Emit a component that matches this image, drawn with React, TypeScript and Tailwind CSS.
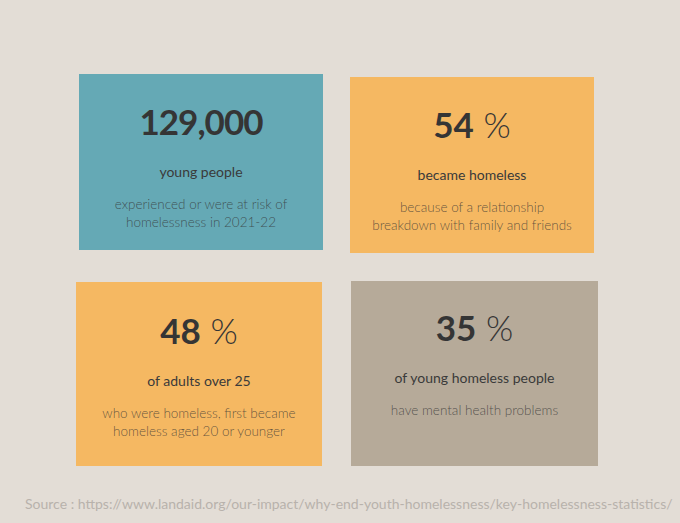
type Stat = {
  value: string;
  percent?: boolean;
  label: string;
  lines: string[];
  box: string;
  pad: string;
};

const stats: Stat[] = [
  {
    value: "129,000",
    label: "young people",
    lines: ["experienced or were at risk of", "homelessness in 2021-22"],
    box: "ml-[3px] w-[244px] h-[176px] bg-[#65a9b5]",
    pad: "pt-[27px]",
  },
  {
    value: "54",
    percent: true,
    label: "became homeless",
    lines: ["because of a relationship", "breakdown with family and friends"],
    box: "mt-[3px] w-[244px] h-[176px] bg-[#f5b862]",
    pad: "pt-[27px]",
  },
  {
    value: "48",
    percent: true,
    label: "of adults over 25",
    lines: ["who were homeless, first became", "homeless aged 20 or younger"],
    box: "mt-[1px] w-[246px] h-[184px] bg-[#f5b862]",
    pad: "pt-[28px]",
  },
  {
    value: "35",
    percent: true,
    label: "of young homeless people",
    lines: ["have mental health problems"],
    box: "ml-[1px] w-[247px] h-[185px] bg-[#b6aa99]",
    pad: "pt-[26px]",
  },
];

function StatCard({ stat }: { stat: Stat }) {
  return (
    <div className={`flex flex-col items-center text-center ${stat.box} ${stat.pad}`}>
      <p className="h-[40px] text-[35px] leading-[40px] text-[#353535]">
        <span className={stat.percent ? "font-bold" : "font-bold tracking-[-1px]"}>
          {stat.value}
        </span>
        {stat.percent ? <span className="font-light"> %</span> : null}
      </p>
      <p className="mt-[21px] text-[14px] leading-[20px] font-normal text-[#3a3a3a]">
        {stat.label}
      </p>
      <div className="mt-[13px] text-[13.5px] leading-[18px] font-light text-[#333333]/75">
        {stat.lines.map((line) => (
          <p key={line}>{line}</p>
        ))}
      </div>
    </div>
  );
}

export default function App() {
  return (
    <div className="relative h-[523px] w-[680px] overflow-hidden bg-[#e3ddd6] font-['Lato',sans-serif]">
      <div className="grid grid-cols-[247px_248px] gap-x-[27px] gap-y-[28px] pl-[76px] pt-[74px]">
        {stats.map((stat) => (
          <StatCard key={stat.label} stat={stat} />
        ))}
      </div>
      <p className="mt-[28px] pl-[25px] text-[14px] leading-[20px] text-[#b8b2ac]">
        Source : https://www.landaid.org/our-impact/why-end-youth-homelessness/key-homelessness-statistics/
      </p>
    </div>
  );
}
